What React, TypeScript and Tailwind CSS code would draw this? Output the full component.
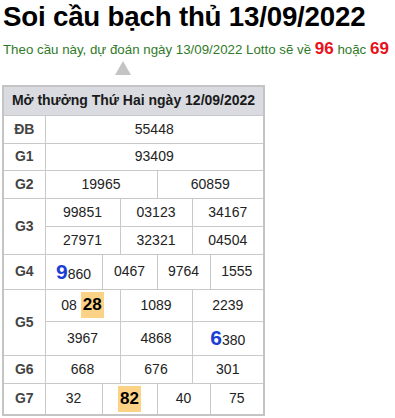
import React from 'react';

const cell = 'border border-[#c9c9c9] text-center text-[14px] text-[#222] p-0';
const label = 'border border-[#c9c9c9] text-center text-[14px] font-bold text-[#444] p-0';

function Hot({ n }: { n: string }) {
  return <span className="inline-block bg-[#fcd386] px-[2px] text-[17px] font-bold leading-[26px] text-black">{n}</span>;
}

function Lead({ d, rest }: { d: string; rest: string }) {
  return (
    <span>
      <b className="text-[21px] text-[#1b3fd6]">{d}</b>
      {rest}
    </span>
  );
}

export default function App() {
  return (
    <div className="bg-white px-[3px] font-['Liberation_Sans',Arial,sans-serif] text-black">
      <h1 className="text-[27.7px] font-bold leading-[34px] tracking-[-0.2px]">Soi cầu bạch thủ 13/09/2022</h1>
      <p className="mt-[5px] whitespace-nowrap text-[13.3px] leading-[20px] text-[#2f7a28]">
        Theo cầu này, dự đoán ngày 13/09/2022 Lotto sẽ về{' '}
        <b className="text-[17px] text-[#e8101a]">96</b> hoặc{' '}
        <b className="text-[17px] text-[#e8101a]">69</b>
      </p>

      {/* mũi tên nhỏ trỏ lên */}
      <div className="ml-[112px] mt-[1px] h-0 w-0 border-x-[8px] border-b-[14px] border-x-transparent border-b-[#c4c4c4]" />

      <table className="mt-[10px] w-[262px] table-fixed border-collapse border-2 border-[#c4c4c4] -ml-px">
        <colgroup>
          <col className="w-[42px]" />
          <col className="w-[57px]" />
          <col className="w-[18px]" />
          <col className="w-[37px]" />
          <col className="w-[35px]" />
          <col className="w-[18px]" />
          <col className="w-[54px]" />
        </colgroup>
        <tbody>
          <tr>
            <td colSpan={7} className="h-[29px] border border-[#c9c9c9] bg-[#d9dbe0] text-center text-[14px] font-bold text-[#1a1a1a]">
              Mở thưởng Thứ Hai ngày 12/09/2022
            </td>
          </tr>
          <tr>
            <td className={`${label} h-[28px]`}>ĐB</td>
            <td colSpan={6} className={cell}>55448</td>
          </tr>
          <tr>
            <td className={`${label} h-[27px]`}>G1</td>
            <td colSpan={6} className={cell}>93409</td>
          </tr>
          <tr>
            <td className={`${label} h-[28px]`}>G2</td>
            <td colSpan={3} className={cell}>19965</td>
            <td colSpan={3} className={cell}>60859</td>
          </tr>
          <tr>
            <td rowSpan={2} className={label}>G3</td>
            <td colSpan={2} className={`${cell} h-[28px]`}>99851</td>
            <td colSpan={2} className={cell}>03123</td>
            <td colSpan={2} className={cell}>34167</td>
          </tr>
          <tr>
            <td colSpan={2} className={`${cell} h-[28px]`}>27971</td>
            <td colSpan={2} className={cell}>32321</td>
            <td colSpan={2} className={cell}>04504</td>
          </tr>
          <tr>
            <td className={`${label} h-[35px]`}>G4</td>
            <td className={cell}><Lead d="9" rest="860" /></td>
            <td colSpan={2} className={cell}>0467</td>
            <td colSpan={2} className={cell}>9764</td>
            <td className={cell}>1555</td>
          </tr>
          <tr>
            <td rowSpan={2} className={label}>G5</td>
            <td colSpan={2} className={`${cell} h-[32px]`}>08 <Hot n="28" /></td>
            <td colSpan={2} className={cell}>1089</td>
            <td colSpan={2} className={cell}>2239</td>
          </tr>
          <tr>
            <td colSpan={2} className={`${cell} h-[34px]`}>3967</td>
            <td colSpan={2} className={cell}>4868</td>
            <td colSpan={2} className={cell}><Lead d="6" rest="380" /></td>
          </tr>
          <tr>
            <td className={`${label} h-[28px]`}>G6</td>
            <td colSpan={2} className={cell}>668</td>
            <td colSpan={2} className={cell}>676</td>
            <td colSpan={2} className={cell}>301</td>
          </tr>
          <tr>
            <td className={`${label} h-[32px]`}>G7</td>
            <td className={cell}>32</td>
            <td colSpan={2} className={cell}><Hot n="82" /></td>
            <td colSpan={2} className={cell}>40</td>
            <td className={cell}>75</td>
          </tr>
        </tbody>
      </table>
    </div>
  );
}
